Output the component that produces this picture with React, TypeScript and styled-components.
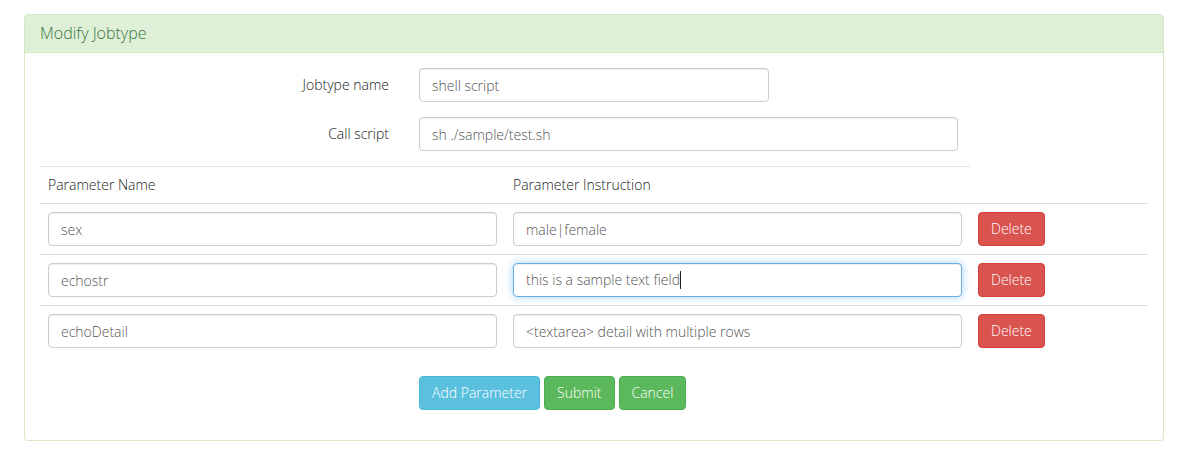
import React from "react";
import styled, { createGlobalStyle } from "styled-components";

const Global = createGlobalStyle`
  html, body { margin: 0; padding: 0; background: #fff; }
  body { font-family: "Open Sans", "Liberation Sans", sans-serif; font-weight: 300; font-size: 14px; color: #333; line-height: 1.42857; }
  * { box-sizing: border-box; }
`;

const Page = styled.div`
  padding: 14px 22px 0 24px;
`;

const Panel = styled.section`
  width: 1140px;
  border: 1px solid #d6e9c6;
  border-radius: 4px;
  background: #fff;
  box-shadow: 0 1px 1px rgba(0, 0, 0, 0.05);
`;

const PanelHeading = styled.div`
  background: #dff0d8;
  color: #3c763d;
  border-bottom: 1px solid #d6e9c6;
  border-radius: 3px 3px 0 0;
  padding: 8px 15px;
  font-size: 16px;
  line-height: 21px;
`;

const PanelBody = styled.div`
  padding: 15px 15px 30px;
`;

const FormRow = styled.div`
  display: grid;
  grid-template-columns: 364px 1fr;
  align-items: center;
  margin-bottom: 15px;
`;

const Label = styled.label`
  text-align: right;
  padding-right: 15px;
  font-weight: 300;
  color: #222;
`;

const Field = styled.div<{ $w: number }>`
  padding-left: 15px;
  width: ${(p) => p.$w + 15}px;
`;

const Input = styled.input`
  display: block;
  width: 100%;
  height: 34px;
  padding: 6px 12px;
  font-family: "Open Sans", "Liberation Sans", sans-serif;
  font-weight: 300;
  font-size: 14px;
  line-height: 1.42857;
  color: #555;
  background: #fff;
  border: 1px solid #ccc;
  border-radius: 4px;
  box-shadow: inset 0 1px 1px rgba(0, 0, 0, 0.075);
  outline: none;
`;

const FocusedBox = styled.div`
  display: flex;
  align-items: center;
  width: 100%;
  height: 34px;
  padding: 6px 12px;
  font-size: 14px;
  color: #555;
  background: #fff;
  border: 1px solid #66afe9;
  border-radius: 4px;
  box-shadow: inset 0 1px 1px rgba(0, 0, 0, 0.075), 0 0 8px rgba(102, 175, 233, 0.6);
  white-space: pre;
`;

const Caret = styled.span`
  display: inline-block;
  width: 1px;
  height: 18px;
  background: #222;
`;

const Rule = styled.hr`
  width: 930px;
  margin: 0;
  border: 0;
  border-top: 1px solid #e5e5e5;
`;

const Table = styled.table`
  width: 1108px;
  border-collapse: collapse;
  border-spacing: 0;
`;

const Th = styled.th`
  text-align: left;
  font-weight: 300;
  color: #222;
  padding: 8px;
  line-height: 20px;
  border-bottom: 1px solid #ddd;
`;

const Tr = styled.tr<{ $last?: boolean }>`
  border-bottom: ${(p) => (p.$last ? "0" : "1px solid #ddd")};
`;

const Td = styled.td<{ $w?: number }>`
  padding: 8px;
  vertical-align: top;
  width: ${(p) => (p.$w ? `${p.$w}px` : "auto")};
`;

const Actions = styled.div`
  display: flex;
  gap: 4px;
  padding-left: 379px;
  margin-top: 20px;
`;

const palette = {
  info: ["#5bc0de", "#46b8da"],
  success: ["#5cb85c", "#4cae4c"],
  danger: ["#d9534f", "#d43f3a"],
};

const Button = styled.button<{ $kind: keyof typeof palette }>`
  height: 34px;
  padding: 6px 12px;
  font-family: "Open Sans", "Liberation Sans", sans-serif;
  font-weight: 300;
  font-size: 14px;
  line-height: 20px;
  color: #fff;
  background: ${(p) => palette[p.$kind][0]};
  border: 1px solid ${(p) => palette[p.$kind][1]};
  border-radius: 4px;
  cursor: pointer;
`;

const params = [
  { name: "sex", instr: "male|female" },
  { name: "echostr", instr: "this is a sample text field", focused: true },
  { name: "echoDetail", instr: "<textarea> detail with multiple rows" },
];

export default function App() {
  return (
    <Page>
      <Global />
      <Panel>
        <PanelHeading>Modify Jobtype</PanelHeading>
        <PanelBody>
          <FormRow>
            <Label>Jobtype name</Label>
            <Field $w={350}>
              <Input readOnly value="shell script" />
            </Field>
          </FormRow>
          <FormRow>
            <Label>Call script</Label>
            <Field $w={539}>
              <Input readOnly value="sh ./sample/test.sh" />
            </Field>
          </FormRow>
          <Rule />
          <Table>
            <thead>
              <tr>
                <Th>Parameter Name</Th>
                <Th>Parameter Instruction</Th>
                <Th></Th>
              </tr>
            </thead>
            <tbody>
              {params.map((p, i) => (
                <Tr key={p.name} $last={i === params.length - 1}>
                  <Td $w={465}>
                    <Input readOnly value={p.name} />
                  </Td>
                  <Td $w={465}>
                    {p.focused ? (
                      <FocusedBox>
                        {p.instr}
                        <Caret />
                      </FocusedBox>
                    ) : (
                      <Input readOnly value={p.instr} />
                    )}
                  </Td>
                  <Td>
                    <Button $kind="danger">Delete</Button>
                  </Td>
                </Tr>
              ))}
            </tbody>
          </Table>
          <Actions>
            <Button $kind="info">Add Parameter</Button>
            <Button $kind="success">Submit</Button>
            <Button $kind="success">Cancel</Button>
          </Actions>
        </PanelBody>
      </Panel>
    </Page>
  );
}
